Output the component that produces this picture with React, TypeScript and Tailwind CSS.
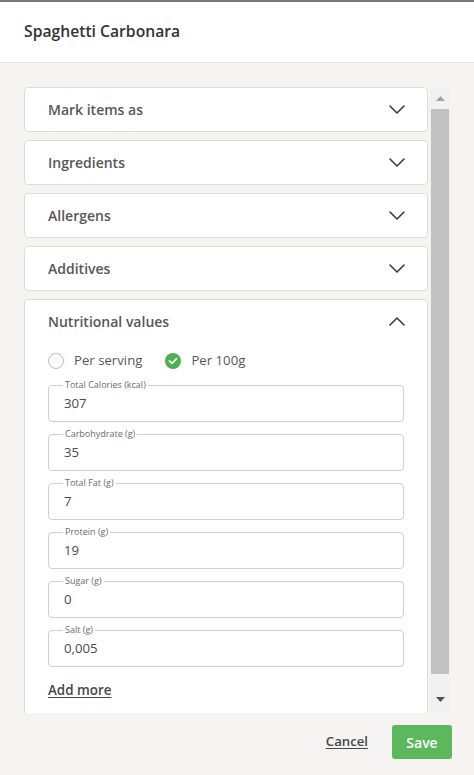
import React from "react";

const font = { fontFamily: '"Open Sans", "Noto Sans", sans-serif' };

function Chevron({ up }: { up?: boolean }) {
  return (
    <svg width="16" height="9" viewBox="0 0 16 9" fill="none" className="shrink-0">
      {up ? (
        <polyline points="1,8 8,1 15,8" stroke="#3d3d3d" strokeWidth="1.6" strokeLinecap="round" strokeLinejoin="round" />
      ) : (
        <polyline points="1,1 8,8 15,1" stroke="#3d3d3d" strokeWidth="1.6" strokeLinecap="round" strokeLinejoin="round" />
      )}
    </svg>
  );
}

function Card({ title }: { title: string }) {
  return (
    <div className="h-[45px] shrink-0 bg-white border border-[#dcdcdc] rounded-[4px] flex items-center justify-between pl-[23px] pr-[22px]">
      <span className="text-[14px] font-semibold text-[#575757]">{title}</span>
      <Chevron />
    </div>
  );
}

function Field({ label, value }: { label: string; value: string }) {
  return (
    <div className="relative h-[37px] border border-[#cfcfcf] rounded-[4px] flex items-center pl-[15px] pt-[1px]">
      <span className="absolute -top-[7px] left-[14px] px-[2px] bg-white text-[9px] leading-[12px] text-[#6a6a6a]">{label}</span>
      <span className="text-[13.2px] text-[#4a4a4a]">{value}</span>
    </div>
  );
}

export default function App() {
  const fields = [
    ["Total Calories (kcal)", "307"],
    ["Carbohydrate (g)", "35"],
    ["Total Fat (g)", "7"],
    ["Protein (g)", "19"],
    ["Sugar (g)", "0"],
    ["Salt (g)", "0,005"],
  ];
  return (
    <div style={font} className="w-[474px] h-[775px] bg-[#f5f4f3] border-t-2 border-[#7a7a7a] flex flex-col overflow-hidden">
      <div className="h-[61px] shrink-0 bg-white border-b border-[#e4e4e4] flex items-center px-6">
        <span className="text-[15.7px] font-semibold text-[#333333]">Spaghetti Carbonara</span>
      </div>
      <div className="pt-6 pl-6 flex shrink-0">
        <div className="w-[404px] h-[626px] overflow-hidden flex flex-col gap-2">
          <Card title="Mark items as" />
          <Card title="Ingredients" />
          <Card title="Allergens" />
          <Card title="Additives" />
          <div className="shrink-0 bg-white border border-[#dcdcdc] rounded-t-[4px] px-[23px] pb-6">
            <div className="h-[43px] flex items-center justify-between">
              <span className="text-[14px] font-semibold text-[#575757]">Nutritional values</span>
              <span className="mr-[-1px]"><Chevron up /></span>
            </div>
            <div className="mt-[8px] h-[20px] flex items-center text-[13.2px] text-[#575757]">
              <span className="w-[16px] h-[16px] rounded-full border border-[#bdbdbd] bg-white" />
              <span className="ml-[10px]">Per serving</span>
              <span className="ml-[23px] w-[16px] h-[16px] rounded-full bg-[#4caf50] flex items-center justify-center">
                <svg width="10" height="8" viewBox="0 0 10 8" fill="none">
                  <polyline points="1.5,4 4,6.3 8.5,1.7" stroke="white" strokeWidth="1.8" strokeLinecap="round" strokeLinejoin="round" />
                </svg>
              </span>
              <span className="ml-[10px]">Per 100g</span>
            </div>
            <div className="mt-[14px] flex flex-col gap-3">
              {fields.map(([l, v]) => (
                <Field key={l} label={l} value={v} />
              ))}
            </div>
            <div className="mt-[13px] h-[20px] flex items-center">
              <span className="text-[13.4px] font-semibold text-[#474747] underline underline-offset-2">Add more</span>
            </div>
          </div>
        </div>
        <div className="ml-[2px] w-[20px] h-[626px] bg-[#f1f1f1] flex flex-col items-center">
          <div className="h-[22px] flex items-center justify-center">
            <svg width="9" height="5" viewBox="0 0 9 5"><polygon points="0,5 4.5,0 9,5" fill="#a3a3a3" /></svg>
          </div>
          <div className="w-[18px] h-[565px] bg-[#c1c1c1]" />
          <div className="flex-1 flex items-center justify-center pt-[12px]">
            <svg width="9" height="5" viewBox="0 0 9 5"><polygon points="0,0 9,0 4.5,5" fill="#505050" /></svg>
          </div>
        </div>
      </div>
      <div className="flex-1 flex items-center justify-end pr-[22px] pb-[4px] gap-6">
        <span className="text-[13.2px] font-semibold text-[#474747] underline underline-offset-2">Cancel</span>
        <button className="w-[60px] h-[34px] rounded-[3px] bg-[#5cb85c] text-white text-[14px] font-semibold">Save</button>
      </div>
    </div>
  );
}
